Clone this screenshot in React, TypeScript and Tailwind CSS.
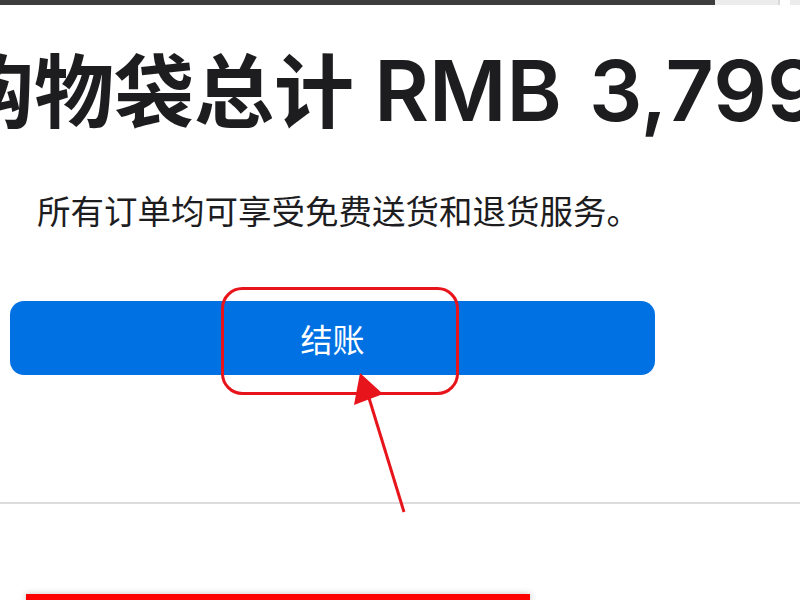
export default function App() {
  return (
    <div className="relative h-[600px] w-[800px] overflow-hidden bg-white font-['Inter','Noto_Sans_CJK_SC',sans-serif] text-[#1d1d1f]">
      {/* window strip at the very top */}
      <div className="flex h-[5px]">
        <div className="w-[715px] bg-[#3d3d3d]" />
        <div className="flex-1 border-r-2 border-[#d9d9d9] bg-[#ececec] mr-[10px]" />
        <div className="w-[10px] bg-[#ececec]" />
      </div>

      <h1 className="-ml-[46px] mt-[46px] whitespace-nowrap text-[80px] font-semibold leading-[80px]">
        购物袋总计 <span className="text-[84px] [word-spacing:6px]">RMB 3,799</span>
      </h1>

      <p className="ml-[37px] mt-[58px] text-[33.5px] leading-[40px] font-['Noto_Sans_CJK_SC',sans-serif]">
        所有订单均可享受免费送货和退货服务。
      </p>

      <div className="mt-[71px] pl-[10px]">
        <button className="flex h-[74px] w-[645px] items-center justify-center rounded-[14px] bg-[#0071e3] text-[32px] text-white font-['Noto_Sans_CJK_SC',sans-serif]">
          结账
        </button>
      </div>

      <div className="mt-[127px] h-[2px] bg-[#dcdcdf]" />

      <div className="ml-[26px] mt-[90px] h-[8px] w-[504px] bg-[#ff0000] shadow-[0_0_6px_rgba(0,0,0,0.25)]" />

      {/* annotation overlay */}
      <svg className="pointer-events-none absolute inset-0" width="800" height="600" viewBox="0 0 800 600">
        <rect x="222.5" y="288.5" width="235" height="105" rx="20" fill="none" stroke="#e8141c" strokeWidth="3" />
        <line x1="404" y1="512" x2="369" y2="398" stroke="#e8141c" strokeWidth="3" />
        <polygon points="360,373 354,405 383,394" fill="#e8141c" />
      </svg>
    </div>
  );
}
